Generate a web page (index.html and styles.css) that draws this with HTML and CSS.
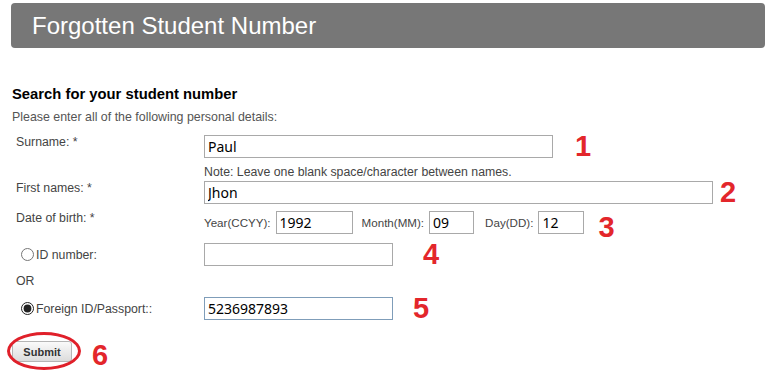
FILE: index.html
```html
<!DOCTYPE html>
<html lang="en">
<head>
    <meta charset="UTF-8">
    <meta name="viewport" content="width=device-width, initial-scale=1.0">
    <title>Forgotten Student Number</title>
    <link rel="stylesheet" href="styles.css">
</head>
<body>
    <header class="page-title">
        <h1>Forgotten Student Number</h1>
    </header>
    <div class="content">
        <h2>Search for your student number</h2>
        <p class="intro">Please enter all of the following personal details:</p>
        <form class="lookup" onsubmit="return false">
            <div class="row">
                <label class="label" for="surname">Surname: *</label>
                <div class="field">
                    <input type="text" id="surname" class="text surname" value="Paul">
                    <span class="mark m1">1</span>
                </div>
            </div>
            <div class="row note-row">
                <span class="label"></span>
                <p class="note">Note: Leave one blank space/character between names.</p>
            </div>
            <div class="row">
                <label class="label" for="firstNames">First names: *</label>
                <div class="field">
                    <input type="text" id="firstNames" class="text first-names" value="Jhon">
                    <span class="mark m2">2</span>
                </div>
            </div>
            <div class="row dob-row">
                <span class="label">Date of birth: *</span>
                <div class="field dob">
                    <label for="year">Year(CCYY):</label>
                    <input type="text" id="year" class="text year" value="1992">
                    <label for="month" class="month-label">Month(MM):</label>
                    <input type="text" id="month" class="text month" value="09">
                    <label for="day" class="day-label">Day(DD):</label>
                    <input type="text" id="day" class="text day" value="12">
                    <span class="mark m3 low">3</span>
                </div>
            </div>
            <div class="row id-row">
                <label class="label radio-label"><input type="radio" name="idType" class="radio">ID number:</label>
                <div class="field">
                    <input type="text" id="idNumber" class="text id-field">
                    <span class="mark m4">4</span>
                </div>
            </div>
            <p class="or">OR</p>
            <div class="row id-row">
                <label class="label radio-label"><input type="radio" name="idType" class="radio" checked>Foreign ID/Passport::</label>
                <div class="field">
                    <input type="text" id="passport" class="text id-field active" value="5236987893">
                    <span class="mark m5">5</span>
                </div>
            </div>
            <div class="actions">
                <div class="submit-wrap">
                    <button type="submit" class="submit">Submit</button>
                    <span class="ring"></span>
                </div>
                <span class="mark m6">6</span>
            </div>
        </form>
    </div>
</body>
</html>
```

FILE: styles.css
```css
body {
    font-family: "Liberation Sans", Arial, sans-serif;
    margin: 0;
    padding: 0;
    background-color: #fff;
    color: #444;
}
.page-title {
    margin: 3px 3px 0 11px;
    height: 45px;
    background-color: #777;
    border-radius: 4px;
}
.page-title h1 {
    margin: 0;
    padding-left: 21px;
    font-size: 24px;
    font-weight: normal;
    line-height: 45px;
    color: #fff;
}
.content {
    padding-left: 12px;
}
h2 {
    margin: 38px 0 0;
    font-size: 14.8px;
    line-height: 17px;
    color: #000;
}
.intro {
    margin: 6px 0 0;
    font-size: 12.4px;
    line-height: 16px;
    color: #555;
}
.lookup {
    margin-top: 10px;
}
.row {
    display: flex;
    align-items: flex-start;
}
.label {
    width: 188px;
    padding-left: 4px;
    font-size: 12.3px;
    line-height: 14px;
    flex-shrink: 0;
}
.field {
    display: flex;
    align-items: center;
    height: 23px;
}
.text {
    box-sizing: border-box;
    height: 23px;
    margin: 0;
    padding: 0 3px;
    border: 1px solid #a9a9a9;
    font-family: "Noto Sans", sans-serif;
    font-size: 14px;
    color: #000;
    background: #fff;
}
.text.active {
    border-color: #7f9db9;
}
.surname { width: 349px; }
.first-names { width: 509px; }
.year { width: 77px; }
.month { width: 45px; }
.day { width: 46px; }
.id-field { width: 189px; }
.note-row {
    margin-top: 7px;
}
.note {
    margin: 0;
    font-size: 12.3px;
    line-height: 14px;
}
.note-row + .row {
    margin-top: 2px;
}
.dob-row {
    margin-top: 7px;
}
.dob label {
    font-size: 11.6px;
    margin-right: 5px;
}
.dob .month-label { margin-left: 9px; }
.dob .day-label { margin-left: 11px; }
.id-row {
    align-items: center;
    margin-top: 9px;
}
.radio-label {
    display: flex;
    align-items: center;
    padding-left: 9px;
    width: 183px;
}
.radio {
    width: 13px;
    height: 13px;
    margin: 0 2px 0 0;
    accent-color: #222;
}
.or {
    margin: 8px 0 0 4px;
    font-size: 12.3px;
    line-height: 14px;
}
.actions {
    display: flex;
    align-items: flex-start;
    margin-top: 21px;
}
.submit-wrap {
    position: relative;
}
.submit {
    display: block;
    height: 21px;
    width: 60px;
    padding: 0;
    border: 1px solid #b5b5b5;
    border-radius: 3px;
    background: linear-gradient(#fafafa, #dcdcdc);
    font-family: "Liberation Sans", Arial, sans-serif;
    font-size: 11px;
    font-weight: bold;
    color: #333;
}
.ring {
    position: absolute;
    left: -5px;
    top: -9px;
    width: 68px;
    height: 32px;
    border: 3px solid #e0202a;
    border-radius: 50%;
}
.mark {
    font-family: "Liberation Sans", Arial, sans-serif;
    font-weight: bold;
    font-size: 29px;
    line-height: 23px;
    color: #e3262b;
}
.mark.low {
    transform: translateY(5px);
}
.m1 { margin-left: 22px; }
.m2 { margin-left: 7px; }
.m3 { margin-left: 14px; }
.m4 { margin-left: 30px; }
.m5 { margin-left: 20px; }
.m6 { margin-left: 20px; line-height: 29px; }
```
